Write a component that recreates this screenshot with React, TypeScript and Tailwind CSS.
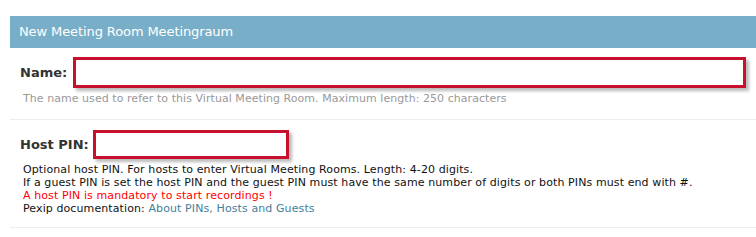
import React from "react";

export default function App() {
  return (
    <div className="w-[756px] h-[237px] bg-white pl-[10px] pt-[16px] overflow-hidden" style={{ fontFamily: '"DejaVu Sans", Verdana, sans-serif' }}>
      <div className="h-[32px] bg-[#79aec8] flex items-center pl-[9px] text-white text-[13px] tracking-[-0.1px]">
        New Meeting Room Meetingraum
      </div>
      <div className="border-b border-[#eee] pl-[10px] pt-[9px] pb-[14px]">
        <div className="flex items-center">
          <span className="text-[13px] font-bold text-[#333]">Name:</span>
          <div className="ml-[6px] w-[673px] h-[31px] border-[3px] border-[#c8102e] shadow-[3px_3px_3px_#bbb] bg-white" />
        </div>
        <div className="mt-[4px] pl-[3px] text-[11px] text-[#999] leading-[13px] tracking-[0.05px]">
          The name used to refer to this Virtual Meeting Room. Maximum length: 250 characters
        </div>
      </div>
      <div className="border-b border-[#eee] pl-[10px] pt-[10px] pb-[12px]">
        <div className="flex items-center">
          <span className="text-[13px] font-bold text-[#333]">Host PIN:</span>
          <div className="ml-[4px] w-[196px] h-[29px] border-[3px] border-[#c8102e] shadow-[3px_3px_3px_#bbb] bg-white" />
        </div>
        <div className="mt-[4px] pl-[3px] text-[11px] text-[#111] leading-[13px] tracking-[0.1px]">
          <div>Optional host PIN. For hosts to enter Virtual Meeting Rooms. Length: 4-20 digits.</div>
          <div>If a guest PIN is set the host PIN and the guest PIN must have the same number of digits or both PINs must end with #.</div>
          <div className="text-[#ff0000]">A host PIN is mandatory to start recordings !</div>
          <div>
            Pexip documentation: <a className="text-[#447e9b]">About PINs, Hosts and Guests</a>
          </div>
        </div>
      </div>
    </div>
  );
}
